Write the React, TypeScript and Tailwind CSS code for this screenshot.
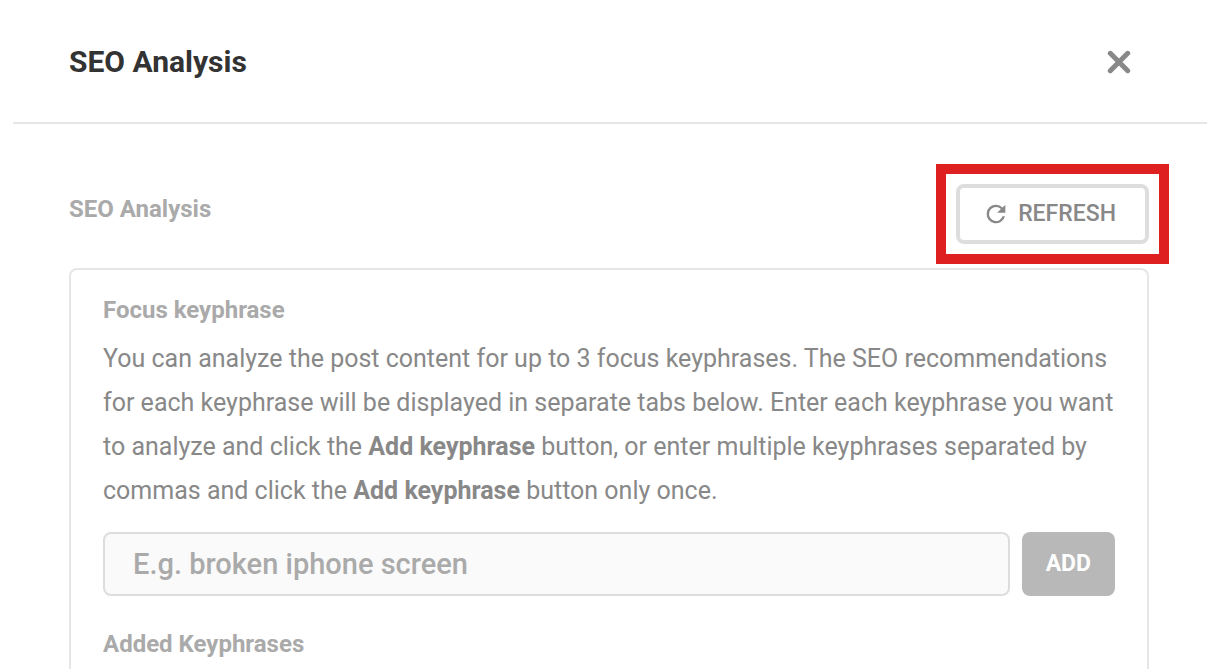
import React from "react";

function CloseIcon() {
  return (
    <svg viewBox="0 0 24 24" className="size-6" fill="none" stroke="currentColor" strokeWidth="5" strokeLinecap="round" aria-hidden="true">
      <path d="M3.3 3.3 20.7 20.7M20.7 3.3 3.3 20.7" />
    </svg>
  );
}

function RefreshIcon() {
  return (
    <svg viewBox="0 0 24 24" className="size-7" fill="currentColor" aria-hidden="true">
      <path d="M17.65 6.35A7.96 7.96 0 0 0 12 4a8 8 0 1 0 7.73 10h-2.08A6 6 0 1 1 12 6c1.66 0 3.14.69 4.22 1.78L13 11h7V4l-2.35 2.35z" />
    </svg>
  );
}

export default function App() {
  return (
    <main className="flex min-h-screen flex-col bg-white px-[13px] pb-0.5 font-['Roboto',sans-serif] text-[#888]">
      <header className="flex h-[124px] items-center justify-between border-b-2 border-[#e6e6e6] pt-0.5 pr-[58px] pl-14">
        <h1 className="text-[30px] leading-10 font-bold text-[#333]">SEO Analysis</h1>
        <button type="button" aria-label="Close" className="mr-4 flex size-7 items-center justify-center">
          <CloseIcon />
        </button>
      </header>

      <section className="flex grow flex-col pt-[60px] pr-[58px] pl-14">
        <div className="mb-6 flex items-start justify-between">
          <h2 className="text-2xl leading-[50px] font-bold text-[#aaa]">SEO Analysis</h2>
          <div className="relative">
            <button
              type="button"
              className="flex h-[60px] items-center gap-2 rounded-lg border-4 border-[#ddd] pr-[29px] pl-[22px] text-[23px] font-medium"
            >
              <RefreshIcon />
              REFRESH
            </button>
            <div className="pointer-events-none absolute -inset-5 border-10 border-[#df2020]" />
          </div>
        </div>

        <div className="grow rounded-t-lg border-2 border-b-0 border-[#e6e6e6] px-8 pt-[18px]">
          <label htmlFor="keyphrase" className="mb-[5px] block text-2xl leading-[44px] font-bold text-[#aaa]">
            Focus keyphrase
          </label>
          <p className="mb-[19px] text-[25px] leading-[44px]">
            You can analyze the post content for up to 3 focus keyphrases. The SEO recommendations for each keyphrase
            will be displayed in separate tabs below. Enter each keyphrase you want to analyze and click the{" "}
            <b>Add keyphrase</b> button, or enter multiple keyphrases separated by commas and click the{" "}
            <b>Add keyphrase</b> button only once.
          </p>
          <form className="flex gap-3" onSubmit={(e) => e.preventDefault()}>
            <input
              id="keyphrase"
              type="text"
              placeholder="E.g. broken iphone screen"
              className="h-16 min-w-0 grow rounded-lg border-2 border-[#ddd] bg-[#fafafa] px-7 text-[29px] font-medium placeholder:text-[#aaa]"
            />
            <button type="submit" className="h-16 rounded-lg bg-[#b8b8b8] px-6 text-[23px] font-bold text-white">
              ADD
            </button>
          </form>
          <h3 className="mt-[26px] -mb-1 text-2xl leading-[44px] font-bold text-[#aaa]">Added Keyphrases</h3>
        </div>
      </section>
    </main>
  );
}
